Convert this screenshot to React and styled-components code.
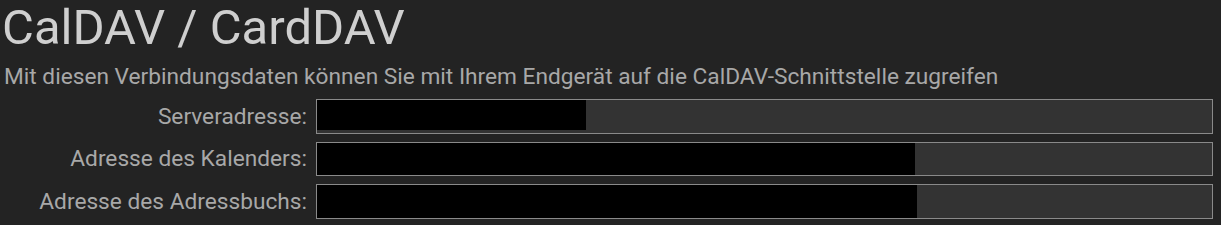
import React from "react";
import styled, { createGlobalStyle } from "styled-components";

const GlobalStyle = createGlobalStyle`
  html, body {
    margin: 0;
    padding: 0;
    background: #232323;
  }
  body {
    font-family: Roboto, "Liberation Sans", sans-serif;
  }
`;

const fields = [
  { label: "Serveradresse:", redacted: 269, short: true },
  { label: "Adresse des Kalenders:", redacted: 598 },
  { label: "Adresse des Adressbuchs:", redacted: 600 },
];

const App = () => (
  <>
    <GlobalStyle />
    <Page>
      <Title>CalDAV / CardDAV</Title>
      <Intro>
        Mit diesen Verbindungsdaten können Sie mit Ihrem Endgerät auf die
        CalDAV-Schnittstelle zugreifen
      </Intro>
      <Form>
        {fields.map((f) => (
          <Row key={f.label}>
            <Label>{f.label}</Label>
            <Field>
              {/* redaction block, width from data */}
              <Redacted $short={f.short} style={{ width: f.redacted }} />
            </Field>
          </Row>
        ))}
      </Form>
    </Page>
  </>
);

const Page = styled.div`
  padding: 0 8px 0 2px;
`;

const Title = styled.h1`
  margin: 0;
  font-size: 49px;
  font-weight: 400;
  line-height: 56px;
  color: #cfcfcf;
`;

const Intro = styled.p`
  margin: 4px 0 0 2px;
  font-size: 22.7px;
  line-height: 34px;
  color: #a8a8a8;
`;

const Form = styled.div`
  display: flex;
  flex-direction: column;
  gap: 8px;
  margin-top: 5px;
`;

const Row = styled.div`
  display: grid;
  grid-template-columns: 305px 1fr;
  column-gap: 9px;
  align-items: center;
`;

const Label = styled.label`
  text-align: right;
  font-size: 22.7px;
  color: #a8a8a8;
`;

const Field = styled.div`
  height: 34.5px;
  box-sizing: border-box;
  border: 1px solid #8a8a8a;
  background: #333333;
  display: flex;
  align-items: flex-start;
`;

const Redacted = styled.div`
  height: ${(p) => (p.$short ? "30px" : "100%")};
  background: #000;
`;

export default App;
